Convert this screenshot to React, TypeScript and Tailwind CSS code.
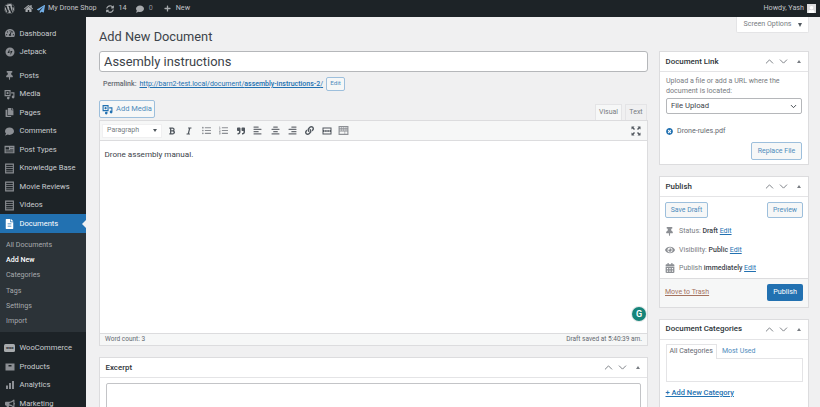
import React from "react";
import {
  FaAlignCenter,
  FaAlignLeft,
  FaAlignRight,
  FaBold,
  FaBullhorn,
  FaCalendarAlt,
  FaComment,
  FaCopy,
  FaEye,
  FaFileAlt,
  FaHome,
  FaItalic,
  FaLink,
  FaListOl,
  FaListUl,
  FaPaperPlane,
  FaPlus,
  FaQuoteRight,
  FaSyncAlt,
  FaTachometerAlt,
  FaThumbtack,
  FaTimesCircle,
  FaUser,
  FaWordpress,
} from "react-icons/fa";
import { ChevronDown, ChevronUp } from "lucide-react";

const MediaIcon = ({ className }: { className?: string }) => (
  <svg viewBox="0 0 20 20" className={className} fill="currentColor">
    <path d="M1 2h11v11H1z M3 4v7h7V4z" fillRule="evenodd" />
    <circle cx="6.5" cy="7.5" r="2" />
    <path d="M13 6h6v8.5a2.5 2.5 0 1 1-2-2.4V8h-4z" />
    <path d="M4 14h6v2.5a2.3 2.3 0 1 1-2-2.2z" />
  </svg>
);

const JetpackIcon = ({ className }: { className?: string }) => (
  <svg viewBox="0 0 20 20" className={className} fill="currentColor">
    <path
      fillRule="evenodd"
      d="M10 1a9 9 0 1 0 0 18 9 9 0 0 0 0-18zM9 4v8H5zm2 4h4l-4 8z"
    />
  </svg>
);

const PostTypesIcon = ({ className }: { className?: string }) => (
  <svg viewBox="0 0 20 20" className={className} fill="currentColor">
    <path
      fillRule="evenodd"
      d="M1 3h18v14H1zm2 3v4h6V6zm8 0v1h6V6zm0 3v1h6V9zm-8 3v1h14v-1zm0 2v1h14v-1z"
    />
  </svg>
);

const RowsIcon = ({ className }: { className?: string }) => (
  <svg viewBox="0 0 20 20" className={className} fill="currentColor">
    <path
      fillRule="evenodd"
      d="M2 1h16v18H2zm2 2v2.500h12V3zm0 4v2.500h12V7zm0 4v2.500h12V11zm0 4v2h12v-2z"
    />
  </svg>
);

const ProductsIcon = ({ className }: { className?: string }) => (
  <svg viewBox="0 0 20 20" className={className} fill="currentColor">
    <path fillRule="evenodd" d="M1 3h18v14H1zm6 3v3h6V6z" />
  </svg>
);

const AnalyticsIcon = ({ className }: { className?: string }) => (
  <svg viewBox="0 0 20 20" className={className} fill="currentColor">
    <path d="M2 11h4v7H2zM8 6h4v12H8zM14 2h4v16h-4z" />
  </svg>
);

const ReadMoreIcon = ({ className }: { className?: string }) => (
  <svg viewBox="0 0 20 20" className={className} fill="currentColor">
    <path
      fillRule="evenodd"
      d="M1 3h18v14H1zm2 2v3h14V5zm0 7v3h14v-3zm1-3h3v2H4zm4.500 0h3v2h-3zm4.500 0h3v2h-3z"
    />
  </svg>
);

const KitchenSinkIcon = ({ className }: { className?: string }) => (
  <svg viewBox="0 0 20 20" className={className} fill="currentColor">
    <path
      fillRule="evenodd"
      d="M1 2h18v16H1zm2 2v2h3V4zm4 0v2h3V4zm4 0v2h3V4zm4 0v2h2V4zM3 8v2h3V8zm4 0v2h3V8zm4 0v2h3V8zm4 0v2h2V8zM3 12v4h9v-4zm10 0v4h4v-4z"
    />
  </svg>
);

const FullscreenIcon = ({ className }: { className?: string }) => (
  <svg viewBox="0 0 20 20" className={className} fill="currentColor">
    <path d="M1 1h6L5 3l3 3-2 2-3-3-2 2zM19 1v6l-2-2-3 3-2-2 3-3-2-2zM1 19v-6l2 2 3-3 2 2-3 3 2 2zM19 19h-6l2-2-3-3 2-2 3 3 2-2z" />
  </svg>
);

const menuTop = [
  { label: "Dashboard", icon: <FaTachometerAlt className="w-[10px] h-[10px]" /> },
  { label: "Jetpack", icon: <JetpackIcon className="w-[10px] h-[10px]" /> },
];

const menuMid = [
  { label: "Posts", icon: <FaThumbtack className="w-[9px] h-[9px]" /> },
  { label: "Media", icon: <MediaIcon className="w-[11px] h-[11px]" /> },
  { label: "Pages", icon: <FaCopy className="w-[9px] h-[9px]" /> },
  { label: "Comments", icon: <FaComment className="w-[9px] h-[9px]" /> },
  { label: "Post Types", icon: <PostTypesIcon className="w-[11px] h-[11px]" /> },
  { label: "Knowledge Base", icon: <RowsIcon className="w-[11px] h-[11px]" /> },
  { label: "Movie Reviews", icon: <RowsIcon className="w-[11px] h-[11px]" /> },
  { label: "Videos", icon: <RowsIcon className="w-[11px] h-[11px]" /> },
];

const subMenu = ["All Documents", "Add New", "Categories", "Tags", "Settings", "Import"];

const menuBottom = [
  {
    label: "WooCommerce",
    icon: (
      <span className="flex items-center justify-center w-[11px] h-[8px] rounded-[1.5px] bg-[#a7aaad] text-[#1d2327] text-[4px] font-bold leading-none">
        woo
      </span>
    ),
  },
  { label: "Products", icon: <ProductsIcon className="w-[10px] h-[10px]" /> },
  { label: "Analytics", icon: <AnalyticsIcon className="w-[10px] h-[10px]" /> },
  { label: "Marketing", icon: <FaBullhorn className="w-[10px] h-[10px]" /> },
];

const MenuItem = ({ label, icon }: { label: string; icon: React.ReactNode }) => (
  <div className="flex items-center h-[18.5px] text-[#c9ccd0]">
    <span className="flex justify-center items-center w-[19.5px] text-[#8c8f94] shrink-0">{icon}</span>
    <span className="text-[7.6px] whitespace-nowrap">{label}</span>
  </div>
);

// The three small controls in every postbox header
const BoxControls = () => (
  <div className="flex items-center text-[#787c82]">
    <ChevronUp className="w-[13px] h-[13px] mr-[1px]" strokeWidth={1.75} />
    <ChevronDown className="w-[13px] h-[13px] mr-[7px]" strokeWidth={1.75} />
    <span className="w-0 h-0 mr-[4px] border-x-[2.5px] border-x-transparent border-b-[3.5px] border-b-[#787c82]" />
  </div>
);

const Postbox = ({
  title,
  className,
  children,
}: {
  title: string;
  className?: string;
  children: React.ReactNode;
}) => (
  <div className={`bg-white border border-[#dcdcde] ${className ?? ""}`}>
    <div className="flex items-center justify-between h-[20px] pl-[5.5px] pr-[3px] border-b border-[#e4e4e6]">
      <span className="text-[7.9px] font-medium text-[#2c3338] whitespace-nowrap">{title}</span>
      <BoxControls />
    </div>
    {children}
  </div>
);

const OutlineButton = ({ label, className }: { label: string; className?: string }) => (
  <span
    className={`inline-flex items-center justify-center whitespace-nowrap border border-[#9dbfdc] rounded-[2px] bg-[#f6f7f7] text-[#4f8cbc] ${className ?? ""}`}
  >
    {label}
  </span>
);

const toolbarIcons = [
  <FaBold key="b" className="w-[8px] h-[8px]" />,
  <FaItalic key="i" className="w-[8px] h-[8px]" />,
  <FaListUl key="ul" className="w-[9px] h-[9px] text-[#8c8f94]" />,
  <FaListOl key="ol" className="w-[9px] h-[9px] text-[#8c8f94]" />,
  <FaQuoteRight key="q" className="w-[8px] h-[8px]" />,
  <FaAlignLeft key="al" className="w-[9px] h-[9px] text-[#6b6f75]" />,
  <FaAlignCenter key="ac" className="w-[9px] h-[9px] text-[#6b6f75]" />,
  <FaAlignRight key="ar" className="w-[9px] h-[9px] text-[#6b6f75]" />,
  <FaLink key="l" className="w-[9px] h-[9px]" />,
  <ReadMoreIcon key="m" className="w-[10px] h-[10px]" />,
  <KitchenSinkIcon key="k" className="w-[11px] h-[11px] text-[#8c8f94]" />,
];

const App = () => {
  return (
    <div className="w-[820px] h-[407px] overflow-hidden flex flex-col bg-[#f0f0f1] text-[#3c434a] font-['Roboto','Noto_Sans',sans-serif]">
      {/* Admin bar */}
      <div className="flex items-center justify-between h-[17px] shrink-0 bg-[#1d2327] text-[#c3c4c7] text-[7.2px]">
        <div className="flex items-center">
          <FaWordpress className="w-[11px] h-[11px] ml-[4px] text-[#a7aaad]" />
          <FaHome className="w-[9px] h-[9px] ml-[9px] text-[#a7aaad]" />
          <FaPaperPlane className="w-[8px] h-[8px] ml-[4px] text-[#72aee6]" />
          <span className="ml-[3px]">My Drone Shop</span>
          <FaSyncAlt className="w-[8px] h-[8px] ml-[9px] text-[#a7aaad]" />
          <span className="ml-[5px]">14</span>
          <FaComment className="w-[8px] h-[8px] ml-[9px] text-[#a7aaad]" />
          <span className="ml-[5px] text-[#8c8f94]">0</span>
          <FaPlus className="w-[7px] h-[7px] ml-[11px] text-[#a7aaad]" />
          <span className="ml-[5px]">New</span>
        </div>
        <div className="flex items-center pr-[4px]">
          <span>Howdy, Yash</span>
          <span className="flex items-end justify-center w-[9px] h-[9px] ml-[3px] bg-[#dcdcde] text-white overflow-hidden">
            <FaUser className="w-[7px] h-[7px]" />
          </span>
        </div>
      </div>

      <div className="flex flex-1 min-h-0">
        {/* Sidebar */}
        <div className="relative w-[86px] shrink-0 bg-[#1d2327] pt-[7px]">
          {menuTop.map((m) => (
            <MenuItem key={m.label} {...m} />
          ))}
          <div className="h-[5.25px]" />
          {menuMid.map((m) => (
            <MenuItem key={m.label} {...m} />
          ))}
          <div className="relative flex items-center h-[18.5px] bg-[#2271b1] text-white">
            <span className="flex justify-center items-center w-[19.5px] shrink-0">
              <FaFileAlt className="w-[9px] h-[10px]" />
            </span>
            <span className="text-[7.6px]">Documents</span>
            <span className="absolute right-0 top-[5.5px] w-0 h-0 border-y-[4px] border-y-transparent border-r-[4px] border-r-[#f0f0f1]" />
          </div>
          <div className="bg-[#2c3338] pt-[5px] pb-[3.25px]">
            {subMenu.map((s) => (
              <div
                key={s}
                className={`flex items-center h-[15.2px] pl-[6px] text-[7.1px] ${
                  s === "Add New" ? "text-white font-medium" : "text-[#a7aaad]"
                }`}
              >
                {s}
              </div>
            ))}
          </div>
          <div className="h-[6.75px]" />
          {menuBottom.map((m) => (
            <MenuItem key={m.label} {...m} />
          ))}
        </div>

        {/* Content */}
        <div className="relative flex-1 min-w-0 overflow-hidden pl-[13px] pr-[11px]">
          {/* Screen options tab */}
          <div className="absolute right-[11px] top-0 flex items-center justify-center gap-[6px] w-[73px] h-[16px] bg-white border border-t-0 border-[#e4e4e6] rounded-b-[2px] text-[7.1px] text-[#787c82]">
            Screen Options
            <span className="w-0 h-0 border-x-[2.5px] border-x-transparent border-t-[4px] border-t-[#50575e]" />
          </div>

          <h1 className="pt-[10px] h-[34px] text-[12.8px] leading-[19px] text-[#3c434a]">Add New Document</h1>

          <div className="flex gap-[11px] items-start">
            {/* Main column */}
            <div className="relative w-[549px] shrink-0">
              <div className="flex items-center h-[21px] pl-[4px] bg-white border border-[#b5b7ba] rounded-[3px] text-[12.9px] text-[#3c434a]">
                Assembly instructions
              </div>
              <div className="flex items-center h-[18px] mt-[3px] pl-[4px] text-[7px] text-[#646970]">
                <span className="font-medium">Permalink:</span>
                <span className="ml-[3px] text-[#2271b1] underline">
                  http://barn2-test.local/document/<b className="font-medium">assembly-instructions-2</b>/
                </span>
                <OutlineButton label="Edit" className="ml-[3px] w-[19px] h-[14px] text-[6.2px]" />
              </div>

              <div className="flex items-end justify-between h-[28px] -mt-[1px]">
                <div className="self-start mt-[8px] flex items-center gap-[3px] w-[56px] h-[18px] justify-center whitespace-nowrap border border-[#9dbfdc] rounded-[2px] bg-[#f6f7f7] text-[#4f8cbc] text-[7.5px]">
                  <MediaIcon className="w-[11px] h-[11px] text-[#2271b1]" />
                  Add Media
                </div>
                <div className="flex gap-[3px] pr-[1px] text-[7px] text-[#787c82]">
                  <span className="flex items-center justify-center w-[27px] h-[16px] bg-[#f6f7f7] border border-b-0 border-[#e4e4e6]">
                    Visual
                  </span>
                  <span className="flex items-center justify-center w-[22px] h-[16px] bg-[#f0f0f1] border border-b-0 border-[#e4e4e6]">
                    Text
                  </span>
                </div>
              </div>

              {/* Editor */}
              <div className="border border-[#dcdcde] bg-white">
                <div className="flex items-center justify-between h-[20px] px-[2px] bg-[#f6f7f7] border-b border-[#dcdcde] text-[#50575e]">
                  <div className="flex items-center">
                    <div className="flex items-center justify-between w-[60px] h-[14px] px-[4px] mr-[1.4px] bg-white border border-[#f0f0f1] text-[7px] text-[#787c82]">
                      Paragraph
                      <span className="w-0 h-0 border-x-[2.5px] border-x-transparent border-t-[3.5px] border-t-[#50575e]" />
                    </div>
                    {toolbarIcons.map((icon, i) => (
                      <span key={i} className="flex items-center justify-center w-[17.2px] h-[14px]">
                        {icon}
                      </span>
                    ))}
                  </div>
                  <FullscreenIcon className="w-[10px] h-[10px] mr-[4px]" />
                </div>
                <div className="h-[192px] pl-[4.5px] pt-[6px] text-[8.1px] leading-[14px] text-[#3c434a]">
                  Drone assembly manual.
                </div>
                <div className="flex items-center justify-between h-[12px] px-[5px] bg-[#f6f7f7] border-t border-[#dcdcde] text-[6.5px] text-[#646970]">
                  <span>Word count: 3</span>
                  <span>Draft saved at 5:40:39 am.</span>
                </div>
              </div>

              {/* Grammarly badge */}
              <div className="absolute right-[2px] top-[256px] flex items-center justify-center w-[14px] h-[14px] rounded-full bg-[#15847a] text-white text-[9px] font-semibold leading-none ring-1 ring-[#e4e8e8]">
                G
              </div>

              <Postbox title="Excerpt" className="mt-[11px]">
                <div className="px-[6px] pt-[5px] pb-[30px]">
                  <div className="h-[60px] border border-[#c3c4c7] rounded-[2px] bg-white" />
                </div>
              </Postbox>
            </div>

            {/* Right column */}
            <div className="w-[150px] shrink-0">
              <Postbox title="Document Link">
                <div className="px-[6px] pt-[4px] pb-[4px]">
                  <p className="text-[7.1px] leading-[9.5px] text-[#787c82]">
                    Upload a file or add a URL where the document is located:
                  </p>
                  <div className="flex items-center justify-between h-[16px] mt-[3px] pl-[4px] pr-[3px] border border-[#b5b7ba] rounded-[2px] text-[7.7px]">
                    File Upload
                    <ChevronDown className="w-[9px] h-[9px] text-[#3c434a]" strokeWidth={2.5} />
                  </div>
                  <div className="flex items-center h-[12px] mt-[11px] text-[7.1px] text-[#646970]">
                    <FaTimesCircle className="w-[7px] h-[7px] text-[#2271b1] mr-[4px]" />
                    Drone-rules.pdf
                  </div>
                  <div className="flex justify-end mt-[5px]">
                    <OutlineButton label="Replace File" className="w-[51px] h-[18px] text-[7px]" />
                  </div>
                </div>
              </Postbox>

              <Postbox title="Publish" className="mt-[11px]">
                <div className="flex justify-between pl-[5px] pr-[5px] pt-[5px]">
                  <OutlineButton label="Save Draft" className="w-[43px] h-[16px] text-[6.9px]" />
                  <OutlineButton label="Preview" className="w-[36px] h-[16px] text-[6.9px]" />
                </div>
                <div className="flex flex-col text-[7px] text-[#787c82] pt-[4px]">
                  <div className="flex items-center h-[18.5px]">
                    <span className="flex justify-center w-[19px] text-[#8c8f94]">
                      <FaThumbtack className="w-[7px] h-[9px]" />
                    </span>
                    Status:&nbsp;<b className="font-medium text-[#3c434a]">Draft</b>&nbsp;
                    <span className="text-[#2271b1] underline">Edit</span>
                  </div>
                  <div className="flex items-center h-[18.5px]">
                    <span className="flex justify-center w-[19px] text-[#8c8f94]">
                      <FaEye className="w-[10px] h-[10px]" />
                    </span>
                    Visibility:&nbsp;<b className="font-medium text-[#3c434a]">Public</b>&nbsp;
                    <span className="text-[#2271b1] underline">Edit</span>
                  </div>
                  <div className="flex items-center h-[18.5px]">
                    <span className="flex justify-center w-[19px] text-[#8c8f94]">
                      <FaCalendarAlt className="w-[10px] h-[10px]" />
                    </span>
                    Publish&nbsp;<b className="font-medium text-[#3c434a]">immediately</b>&nbsp;
                    <span className="text-[#2271b1] underline">Edit</span>
                  </div>
                </div>
                <div className="flex items-center justify-between h-[29px] pl-[5px] pr-[5px] bg-[#f6f7f7] border-t border-[#dcdcde]">
                  <span className="text-[7px] text-[#a5735f] underline">Move to Trash</span>
                  <span className="flex items-center justify-center w-[36px] h-[17px] rounded-[2px] bg-[#2271b1] text-white text-[7.2px]">
                    Publish
                  </span>
                </div>
              </Postbox>

              <Postbox title="Document Categories" className="mt-[11px]">
                <div className="px-[5.5px] pt-[4px] pb-[30px]">
                  <div className="flex text-[7px] h-[15px]">
                    <span className="flex items-center px-[3px] border border-b-0 border-[#e4e4e6] text-[#646970] bg-white z-10">
                      All Categories
                    </span>
                    <span className="flex items-center ml-[5px] text-[#4f8cbc]">Most Used</span>
                  </div>
                  <div className="h-[24px] -mt-[1px] border border-[#e4e4e6]" />
                  <div className="mt-[5px] text-[7.5px] font-medium text-[#2271b1] underline">+ Add New Category</div>
                </div>
              </Postbox>
            </div>
          </div>
        </div>
      </div>
    </div>
  );
};

export default App;
